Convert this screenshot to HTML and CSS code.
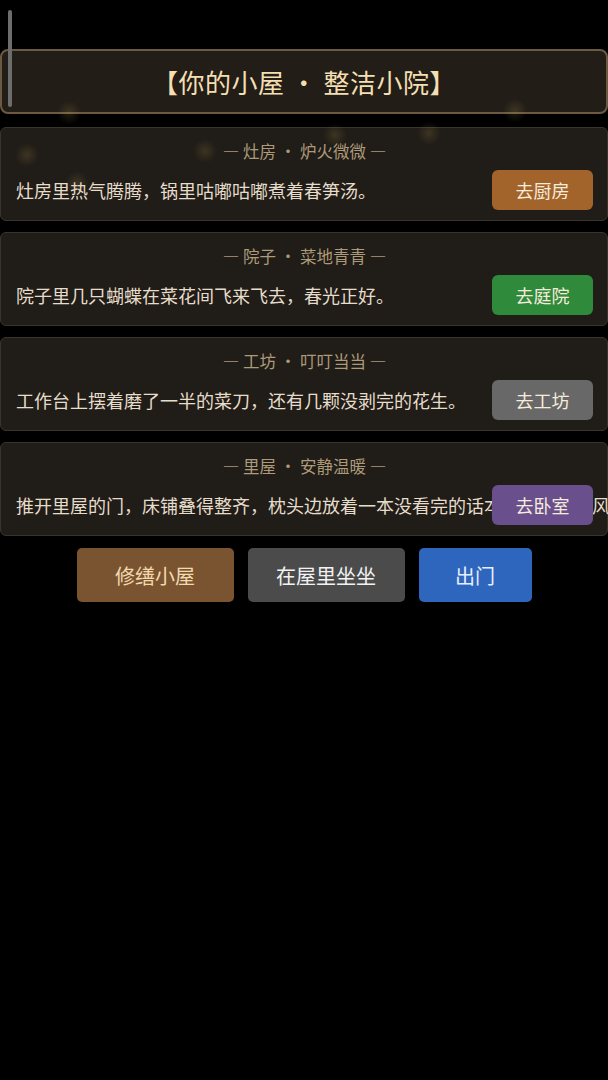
FILE: index.html
```html
<!DOCTYPE html>
<html lang="zh-CN">
<head>
  <meta charset="UTF-8">
  <meta name="viewport" content="width=device-width, initial-scale=1.0">
  <title>你的小屋</title>
  <link rel="stylesheet" href="styles.css">
</head>
<body>

<div class="scroll-thumb"></div>

<div class="container">
  <div class="house-title">【你的小屋 · 整洁小院】</div>

  <div class="room">
    <div class="room-name">— 灶房 · 炉火微微 —</div>
    <div class="room-row">
      <span class="room-text">灶房里热气腾腾，锅里咕嘟咕嘟煮着春笋汤。</span>
      <button class="room-btn kitchen">去厨房</button>
    </div>
  </div>

  <div class="room">
    <div class="room-name">— 院子 · 菜地青青 —</div>
    <div class="room-row">
      <span class="room-text">院子里几只蝴蝶在菜花间飞来飞去，春光正好。</span>
      <button class="room-btn yard">去庭院</button>
    </div>
  </div>

  <div class="room">
    <div class="room-name">— 工坊 · 叮叮当当 —</div>
    <div class="room-row">
      <span class="room-text">工作台上摆着磨了一半的菜刀，还有几颗没剥完的花生。</span>
      <button class="room-btn workshop">去工坊</button>
    </div>
  </div>

  <div class="room">
    <div class="room-name">— 里屋 · 安静温暖 —</div>
    <div class="room-row">
      <span class="room-text">推开里屋的门，床铺叠得整齐，枕头边放着一本没看完的话本，窗外透进风来。</span>
      <button class="room-btn bedroom">去卧室</button>
    </div>
  </div>

  <div class="actions">
    <button class="action-btn repair">修缮小屋</button>
    <button class="action-btn sit">在屋里坐坐</button>
    <button class="action-btn leave">出门</button>
  </div>
</div>

<!-- faint glowing specks over the cards -->
<div class="specks">
  <span class="speck" style="left:56px; top:100px;"></span>
  <span class="speck" style="left:192px; top:138px;"></span>
  <span class="speck" style="left:14px; top:142px;"></span>
  <span class="speck" style="left:64px; top:170px;"></span>
  <span class="speck" style="left:416px; top:120px;"></span>
  <span class="speck" style="left:502px; top:98px;"></span>
  <span class="speck" style="left:322px; top:122px;"></span>
</div>

</body>
</html>
```

FILE: styles.css
```css
body {
  margin: 0;
  background-color: #000;
  font-family: "Noto Sans CJK SC", "Noto Sans", sans-serif;
  color: #e6dccb;
  overflow-x: hidden;
}
.container {
  padding-top: 49px;
  display: flex;
  flex-direction: column;
  gap: 11px;
}
.house-title {
  height: 61px;
  display: flex;
  align-items: center;
  justify-content: center;
  background-color: #221d17;
  border: 2px solid #6b5942;
  border-radius: 8px;
  color: #f3dfb2;
  font-size: 26px;
  letter-spacing: 0.5px;
  margin-bottom: 2px;
}
.room {
  background-color: rgba(33, 29, 24, 0.96);
  border: 1px solid #3a342c;
  border-radius: 6px;
  padding: 13px 14px 10px 15px;
}
.room-name {
  text-align: center;
  color: #ad9a7a;
  font-size: 16.5px;
  line-height: 20px;
  margin-bottom: 9px;
}
.room-row {
  display: flex;
  align-items: center;
  gap: 8px;
}
.room-text {
  flex: 1 1 auto;
  min-width: 0;
  white-space: nowrap;
  font-size: 18px;
  line-height: 24px;
}
.room-btn {
  flex-shrink: 0;
  width: 101px;
  height: 40px;
  border: none;
  border-radius: 6px;
  color: #f6ecdc;
  font-family: inherit;
  font-size: 18px;
  cursor: pointer;
}
.room-btn.kitchen {
  background-color: #a3642c;
}
.room-btn.yard {
  background-color: #2f8a3b;
}
.room-btn.workshop {
  background-color: #686868;
}
.room-btn.bedroom {
  background-color: #6a4f8d;
}
.actions {
  display: flex;
  justify-content: center;
  gap: 14px;
  margin-top: 1px;
}
.action-btn {
  height: 54px;
  border: none;
  border-radius: 5px;
  font-family: inherit;
  font-size: 20px;
  color: #f2f2f2;
  cursor: pointer;
}
.action-btn.repair {
  width: 157px;
  background-color: #7a5430;
  color: #f2d9ae;
}
.action-btn.sit {
  width: 157px;
  background-color: #4b4b4b;
}
.action-btn.leave {
  width: 113px;
  background-color: #2f66bd;
  color: #e6efff;
}
.scroll-thumb {
  position: absolute;
  left: 8px;
  top: 10px;
  width: 4px;
  height: 97px;
  border-radius: 2px;
  background-color: #6d6d6d;
  z-index: 2;
}
.specks {
  position: absolute;
  left: 0;
  top: 0;
  width: 100%;
  height: 0;
  pointer-events: none;
}
.speck {
  position: absolute;
  width: 26px;
  height: 26px;
  border-radius: 50%;
  background: radial-gradient(circle, rgba(210, 180, 90, 0.16) 0%, rgba(210, 180, 90, 0) 65%);
}
```
